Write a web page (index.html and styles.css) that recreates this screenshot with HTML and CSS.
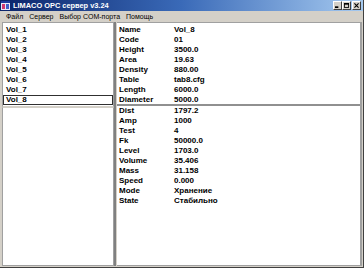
FILE: index.html
```html
<!DOCTYPE html>
<html lang="ru">
<head>
<meta charset="UTF-8">
<title>LIMACO OPC сервер v3.24</title>
<link rel="stylesheet" href="styles.css">
</head>
<body>
<div class="window">
	<div class="titlebar">
		<svg class="app-icon" width="9" height="9" viewBox="0 0 9 9">
			<rect x="0" y="0" width="9" height="9" fill="#e8e8f8"/>
			<rect x="0" y="0" width="9" height="2" fill="#1c3c9c"/>
			<rect x="1" y="3" width="3" height="5" fill="#d03870"/>
			<rect x="5" y="3" width="3" height="5" fill="#4060c8"/>
		</svg>
		<span class="title">LIMACO OPC сервер v3.24</span>
		<div class="caption-buttons">
			<span class="cbtn"><svg width="6" height="6" viewBox="0 0 6 6"><rect x="0" y="4" width="4" height="2" fill="#000"/></svg></span>
			<span class="cbtn"><svg width="6" height="6" viewBox="0 0 6 6"><rect x="0.5" y="0.5" width="5" height="5" fill="none" stroke="#000"/><rect x="0" y="0" width="6" height="2" fill="#000"/></svg></span>
			<span class="cbtn close"><svg width="6" height="6" viewBox="0 0 6 6"><path d="M0.5 0.5L5.5 5.5M5.5 0.5L0.5 5.5" stroke="#000" stroke-width="1.3"/></svg></span>
		</div>
	</div>

	<div class="menubar">
		<span>Файл</span>
		<span>Сервер</span>
		<span>Выбор COM-порта</span>
		<span>Помощь</span>
	</div>

	<div class="main">
		<div class="left">
			<ul class="vessels">
				<li>Vol_1</li>
				<li>Vol_2</li>
				<li>Vol_3</li>
				<li>Vol_4</li>
				<li>Vol_5</li>
				<li>Vol_6</li>
				<li>Vol_7</li>
				<li class="focused">Vol_8</li>
			</ul>
			<div class="pane blank"></div>
		</div>

		<div class="right">
			<dl class="props top">
				<dt>Name</dt><dd>Vol_8</dd>
				<dt>Code</dt><dd>01</dd>
				<dt>Height</dt><dd>3500.0</dd>
				<dt>Area</dt><dd>19.63</dd>
				<dt>Density</dt><dd>880.00</dd>
				<dt>Table</dt><dd>tab8.cfg</dd>
				<dt>Length</dt><dd>6000.0</dd>
				<dt>Diameter</dt><dd>5000.0</dd>
			</dl>
			<dl class="props bottom">
				<dt>Dist</dt><dd>1797.2</dd>
				<dt>Amp</dt><dd>1000</dd>
				<dt>Test</dt><dd>4</dd>
				<dt>Fk</dt><dd>50000.0</dd>
				<dt>Level</dt><dd>1703.0</dd>
				<dt>Volume</dt><dd>35.406</dd>
				<dt>Mass</dt><dd>31.158</dd>
				<dt>Speed</dt><dd>0.000</dd>
				<dt>Mode</dt><dd>Хранение</dd>
				<dt>State</dt><dd>Стабильно</dd>
			</dl>
		</div>
	</div>
</div>
</body>
</html>
```

FILE: styles.css
```css
html,
body {
	margin: 0;
	padding: 0;
}
body {
	width: 364px;
	height: 268px;
	overflow: hidden;
	background: #d4d0c8;
	font-family: "Liberation Sans", Arial, sans-serif;
	color: #000;
}
.window {
	display: flex;
	flex-direction: column;
	height: 268px;
	box-sizing: border-box;
	border-right: 1px solid #404040;
	border-bottom: 1px solid #404040;
}

.titlebar {
	display: flex;
	align-items: center;
	height: 11px;
	padding: 0 2px 0 1px;
	background: linear-gradient(to right, #0a246a, #3a6ab8 50%, #a6caf0);
}
.app-icon {
	flex: none;
	margin-right: 3px;
}
.title {
	font-size: 7.4px;
	font-weight: bold;
	color: #fff;
	white-space: nowrap;
}
.caption-buttons {
	display: flex;
	margin-left: auto;
}
.cbtn {
	display: flex;
	align-items: center;
	justify-content: center;
	width: 9px;
	height: 9px;
	box-sizing: border-box;
	background: #d4d0c8;
	border: 1px solid;
	border-color: #fff #404040 #404040 #fff;
}
.cbtn svg {
	width: 5px;
	height: 5px;
}
.cbtn.close {
	margin-left: 1px;
}

.menubar {
	display: flex;
	align-items: center;
	gap: 6px;
	height: 11px;
	padding-left: 6px;
	font-size: 7px;
	white-space: nowrap;
}

.main {
	flex: 1;
	display: flex;
	gap: 1px;
	padding: 0 1px 1px 2px;
	min-height: 0;
}
.left {
	display: flex;
	flex-direction: column;
	width: 112px;
	flex: none;
	border-right: 2px solid #808080;
}
.vessels {
	list-style: none;
	margin: 0;
	padding: 2px 0 1px;
	height: 85px;
	box-sizing: border-box;
	background: #fff;
	border: 1px solid #a0a0a0;
	border-bottom: 1px solid #d4d0c8;
}
.vessels li {
	height: 10px;
	line-height: 10px;
	padding-left: 3px;
	font-size: 8px;
	font-weight: bold;
	box-sizing: border-box;
}
.vessels li.focused {
	border: 1px solid #303030;
	line-height: 8px;
	padding-left: 2px;
}
.pane {
	flex: 1;
	background: #fff;
	border: 1px solid #a0a0a0;
	border-top-color: #d4d0c8;
}

.right {
	flex: 1;
	display: flex;
	flex-direction: column;
	border-right: 2px solid #a0a0a0;
}
.props {
	display: grid;
	grid-template-columns: 55px 1fr;
	grid-auto-rows: 10px;
	align-content: start;
	margin: 0;
	padding: 0 0 0 2px;
	background: #fff;
	font-size: 8px;
	font-weight: bold;
	line-height: 10px;
}
.props dt,
.props dd {
	margin: 0;
	white-space: nowrap;
}
.props.top {
	height: 84px;
	box-sizing: border-box;
	padding-top: 2px;
	border-top: 1px solid #a0a0a0;
	border-bottom: 2px solid #909090;
}
.props.bottom {
	flex: 1;
	border-bottom: 1px solid #a0a0a0;
}
```
